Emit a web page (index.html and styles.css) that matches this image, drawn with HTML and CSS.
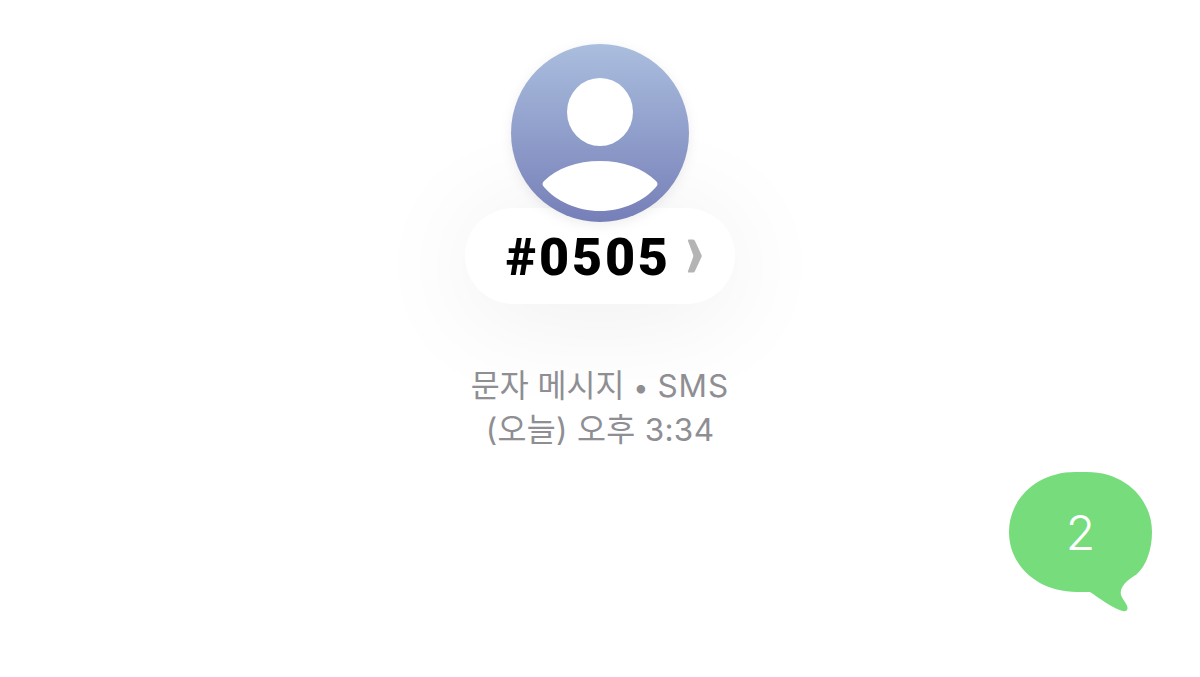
FILE: index.html
```html
<!DOCTYPE html>
<html lang="ko">
<head>
  <meta charset="UTF-8">
  <title>메시지</title>
  <link rel="stylesheet" href="styles.css">
</head>
<body>

  <header class="contact">
    <svg class="avatar" viewBox="0 0 178 178" aria-hidden="true">
      <defs>
        <linearGradient id="avatarFill" x1="0" y1="0" x2="0" y2="1">
          <stop offset="0" stop-color="#aabede"/>
          <stop offset="1" stop-color="#767fb8"/>
        </linearGradient>
      </defs>
      <circle cx="89" cy="89" r="89" fill="url(#avatarFill)"/>
      <ellipse cx="89" cy="68" rx="33" ry="34" fill="#fff"/>
      <path d="M33 137 C46 124 66 117 89 117 C112 117 132 124 145 137 C147 139 147 141 145 143 C133 157 112 167 89 167 C66 167 45 157 33 143 C31 141 31 139 33 137Z" fill="#fff"/>
    </svg>

    <div class="name-pill">
      <span class="name">#0505</span>
      <svg class="chevron" viewBox="0 0 15 36" aria-hidden="true">
        <path d="M2 1.500 H6 Q7.500 1.500 8 3 L14.500 17 Q15 18 14.500 19 L8 33 Q7.500 34.500 6 34.500 H2 Q0.500 34.500 1 33 L6 19.500 Q6.500 18 6 16.500 L1 3 Q0.500 1.500 2 1.500Z" fill="#b4b4b4"/>
      </svg>
    </div>

    <div class="meta">
      <div>문자 메시지 <span class="dot">•</span> <span class="sms">SMS</span></div>
      <div class="time">(오늘) 오후 3:34</div>
    </div>
  </header>

  <section class="thread">
    <div class="bubble">
      <svg class="bubble-shape" viewBox="0 0 143 140" aria-hidden="true">
        <path d="M66 0 H78 C116 0 143 27 143 60 C143 78 137 94 127.700 102.300 C122 106 112 112 111.700 120.700 C111.700 126 118 131 118.500 135.500 C118.800 139 116 140 112 138.500 C102 135 90 126 81 120 L68 120 C28 120 0 93 0 60 C0 27 28 0 66 0Z" fill="#77dc7c"/>
      </svg>
      <span class="bubble-text">2</span>
    </div>
  </section>

</body>
</html>
```

FILE: styles.css
```css
html, body {
  height: 100%;
}
body {
  margin: 0;
  background-color: #fff;
  font-family: Inter, "Noto Sans CJK KR", sans-serif;
  overflow: hidden;
}
.contact {
  display: flex;
  flex-direction: column;
  align-items: center;
  padding-top: 44px;
}
.avatar {
  display: block;
  width: 178px;
  height: 178px;
  position: relative;
  z-index: 1;
  filter: drop-shadow(0 3px 6px rgba(0, 0, 0, 0.07));
}
.name-pill {
  display: flex;
  align-items: center;
  gap: 16px;
  box-sizing: border-box;
  width: 270px;
  height: 96px;
  margin-top: -14px;
  padding-left: 41px;
  background-color: #fff;
  border-radius: 48px;
  box-shadow: 0 10px 110px rgba(0, 0, 0, 0.075);
}
.name {
  font-family: Roboto, sans-serif;
  font-size: 52px;
  font-weight: 900;
  letter-spacing: 2.8px;
  line-height: 60px;
  margin-top: 3px;
  color: #000;
}
.chevron {
  width: 15px;
  height: 36px;
}
.meta {
  margin-top: 61px;
  font-size: 31.5px;
  line-height: 42px;
  color: #8e8e93;
  text-align: center;
}
.dot {
  font-size: 27px;
}
.sms {
  letter-spacing: 1px;
}
.time {
  letter-spacing: 0.3px;
}
.thread {
  display: flex;
  justify-content: flex-end;
  padding: 21px 48px 0 0;
}
.bubble {
  position: relative;
  width: 143px;
  height: 140px;
}
.bubble-shape {
  display: block;
  width: 100%;
  height: 100%;
}
.bubble-text {
  position: absolute;
  top: 0;
  left: 0;
  width: 100%;
  height: 120px;
  display: flex;
  align-items: center;
  justify-content: center;
  font-size: 48px;
  font-weight: 350;
  color: #fff;
}
```
